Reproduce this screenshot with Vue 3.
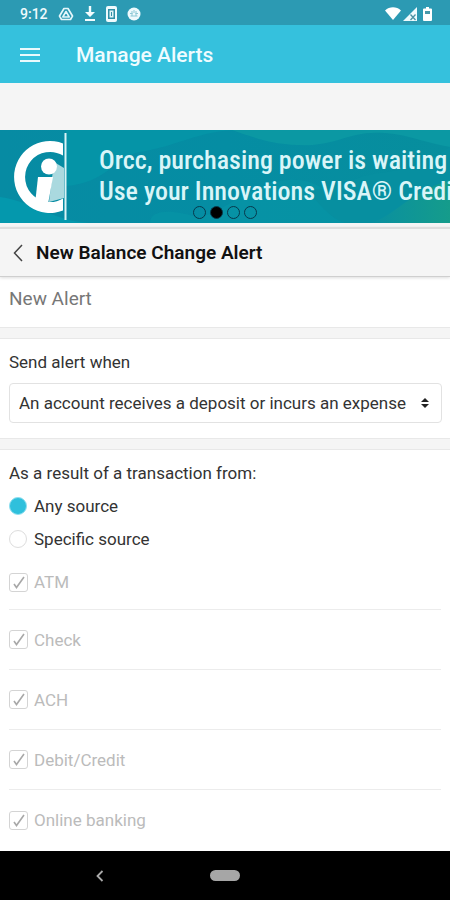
<script setup>
import { ref } from 'vue'

const trigger = ref('any-activity')
const source = ref('any')
const channels = ref([
  { id: 'atm', label: 'ATM', checked: true },
  { id: 'check', label: 'Check', checked: true },
  { id: 'ach', label: 'ACH', checked: true },
  { id: 'card', label: 'Debit/Credit', checked: true },
  { id: 'online', label: 'Online banking', checked: true },
])
</script>

<template>
  <div class="screen">
    <div class="status">
      <span class="clock">9:12</span>
      <div class="notices">
        <svg width="16" height="14" viewBox="0 0 16 14">
          <path d="M6 1.500h4l4.500 7.500-2 3.500h-9l-2-3.500z" fill="none" stroke="#e4f6fa" stroke-width="1.700" stroke-linejoin="round" />
          <path d="M8 4.500l3.200 5.500H4.800z" fill="none" stroke="#e4f6fa" stroke-width="1.600" stroke-linejoin="round" />
        </svg>
        <svg width="12" height="16" viewBox="0 0 12 16">
          <path d="M4.800 0h2.400v6H11l-5 5-5-5h3.800zM1 13h10v2H1z" fill="#f4fcfe" />
        </svg>
        <svg width="11" height="16" viewBox="0 0 11 16">
          <rect width="11" height="16" rx="2" fill="#effafd" />
          <rect x="2" y="3" width="7" height="10" fill="#2f8fa6" />
          <path d="M3.500 4.500h4v7h-4z" fill="#dff4f8" />
          <path d="M5.500 6v4" stroke="#2f8fa6" />
        </svg>
        <svg width="14" height="14" viewBox="0 0 14 14">
          <circle cx="7" cy="7" r="6.500" fill="#effafd" />
          <path d="M3 6.500h2.500M8.500 6.500H11M3.500 9h7M7 3v3M5 4v5M9 4v5" stroke="#8cc8d5" fill="none" />
        </svg>
      </div>
      <div class="signals">
        <svg width="16" height="13" viewBox="0 0 16 13">
          <path d="M0 3.500C4.500-.9 11.500-.9 16 3.500L8 13z" fill="#fff" />
        </svg>
        <svg width="14" height="14" viewBox="0 0 14 14">
          <path d="M14 0v14H0z" fill="#eefafd" />
          <path d="M7.500 7.500l5 5.500M12.500 7.500l-5 5.500" stroke="#4a91a3" stroke-width="1.300" />
        </svg>
        <svg class="battery" width="9" height="14" viewBox="0 0 9 14">
          <path d="M3 0h3v1.500h2q1 0 1 1V13q0 1-1 1H1q-1 0-1-1V2.500q0-1 1-1h2z" fill="#fff" />
          <path d="M2 4h5v3H2z" fill="#4898aa" />
        </svg>
      </div>
    </div>

    <header class="appbar">
      <button class="icon-btn" type="button" aria-label="Menu">
        <svg width="20" height="14" viewBox="0 0 20 14">
          <path d="M0 1h20M0 7h20M0 13h20" stroke="#e9fafd" stroke-width="2" />
        </svg>
      </button>
      <h1>Manage Alerts</h1>
    </header>

    <section class="banner">
      <svg class="waves" viewBox="0 0 450 93" preserveAspectRatio="none">
        <defs>
          <linearGradient id="wash" x1="0" y1="0" x2="1" y2="0">
            <stop offset="0" stop-color="#078ba3" />
            <stop offset="0.500" stop-color="#058da3" />
            <stop offset="1" stop-color="#078e9d" />
          </linearGradient>
          <linearGradient id="shore" x1="0" y1="0" x2="1" y2="0">
            <stop offset="0" stop-color="#098fa1" />
            <stop offset="1" stop-color="#159c8b" />
          </linearGradient>
        </defs>
        <path d="M0 0h450v93H0z" fill="url(#wash)" />
        <path d="M66 0h174c-40 0-65 17-100 22-25 4-32 31-74 34z" fill="#0594a7" />
        <path d="M232 0c20 7 38 14 65 15 42 2 50-15 88-12 25 2 44 11 65 14V0z" fill="#0b98a3" />
        <path d="M0 67c35 5 55 25 91 26H0z" fill="#0498ad" />
        <path d="M150 93c0-15 27-13 48-5 27-7 55-35 90-38 34-2 42 18 63 30 9 6 22 9 31 13z" fill="#0796a7" opacity=".6" />
        <path d="M300 58c35 6 50-12 80-15 28-3 49-12 70-26v76H345c-22-8-26-25-45-35z" fill="#078fa0" />
        <path d="M370 93c25-7 35-28 80-43v43z" fill="url(#shore)" />
      </svg>
      <svg class="logo" width="54" height="87" viewBox="0 0 54 87">
        <path d="M50 10.400A36 36 0 1 0 50 77.600V65.400A25 25 0 1 1 50 22.600z" fill="#fff" />
        <path d="M41 29l10 6v30l-15 4z" fill="#aad9df" />
        <circle cx="36" cy="33.500" r="8" fill="#fff" />
        <path d="M25 44h15l-5 27H22z" fill="#fff" />
        <path d="M52.500 0v87" stroke="#d9f3f6" stroke-width="2" />
      </svg>
      <p class="pitch">Orcc, purchasing power is waiting<br />Use your Innovations VISA® Credi</p>
      <div class="dots">
        <button type="button" aria-label="Slide 1"></button>
        <button type="button" class="on" aria-label="Slide 2"></button>
        <button type="button" aria-label="Slide 3"></button>
        <button type="button" aria-label="Slide 4"></button>
      </div>
    </section>

    <div class="titlebar">
      <button class="icon-btn" type="button" aria-label="Back">
        <svg width="10" height="18" viewBox="0 0 10 18">
          <path d="M9 1L1.500 9 9 17" fill="none" stroke="#444" stroke-width="1.500" />
        </svg>
      </button>
      <h2>New Balance Change Alert</h2>
    </div>

    <main>
      <section class="card intro"><p>New Alert</p></section>

      <section class="card when">
        <label for="trigger">Send alert when</label>
        <div class="select">
          <select id="trigger" v-model="trigger">
            <option value="any-activity">An account receives a deposit or incurs an expense</option>
          </select>
          <svg width="8" height="10" viewBox="0 0 8 10">
            <path d="M0 4l4-4 4 4zM0 6h8l-4 4z" fill="#222" />
          </svg>
        </div>
      </section>

      <section class="card from">
        <fieldset>
          <legend>As a result of a transaction from:</legend>
          <label class="choice"><input v-model="source" type="radio" name="source" value="any" />Any source</label>
          <label class="choice"><input v-model="source" type="radio" name="source" value="specific" />Specific source</label>
        </fieldset>
        <ul>
          <li v-for="c in channels" :key="c.id">
            <label class="channel">
              <span class="tick">
                <input v-model="c.checked" type="checkbox" :disabled="source === 'any'" />
                <svg v-if="c.checked" width="12" height="13" viewBox="0 0 12 13">
                  <path d="M1 8l2.500 3.500L11 1" fill="none" stroke="#a8a8a8" stroke-width="1.600" />
                </svg>
              </span>
              {{ c.label }}
            </label>
          </li>
        </ul>
      </section>
    </main>

    <nav class="sysnav">
      <button type="button" aria-label="System back">
        <svg width="8" height="12" viewBox="0 0 8 12">
          <path d="M6.500 1L1.500 6l5 5" fill="none" stroke="#aaa" stroke-width="1.800" />
        </svg>
      </button>
      <button class="home" type="button" aria-label="Home"><span></span></button>
      <span></span>
    </nav>
  </div>
</template>

<style>
body {
  background: #fff;
}
</style>

<style scoped>
* {
  box-sizing: border-box;
}
.screen {
  display: flex;
  flex-direction: column;
  min-height: 100vh;
  overflow: hidden;
  background: #f5f5f5;
  color: #333;
  font: 17px/20px Roboto, "Liberation Sans", sans-serif;
}
h1, h2, p, ul, fieldset, legend {
  margin: 0;
  padding: 0;
  border: 0;
}
ul {
  list-style: none;
}
button {
  display: grid;
  place-items: center;
  padding: 0;
  border: 0;
  background: none;
}
.status {
  display: flex;
  align-items: center;
  height: 25px;
  padding: 2px 18px 0 20px;
  background: #2c9ab3;
  color: #effafd;
}
.clock {
  font-size: 14px;
  font-weight: 500;
}
.notices {
  display: flex;
  align-items: center;
  gap: 10px;
  margin-left: 10px;
}
.signals {
  display: flex;
  align-items: center;
  gap: 2px;
  margin-left: auto;
}
.battery {
  margin-left: 4px;
}
.appbar {
  display: flex;
  align-items: center;
  gap: 36px;
  height: 58px;
  margin-bottom: 47px;
  padding: 2px 20px 0;
  background: #35c1dd;
}
h1 {
  color: #effcff;
  font-size: 21px;
  font-weight: 500;
  line-height: 28px;
}
.banner {
  position: relative;
  display: flex;
  align-items: center;
  gap: 32px;
  height: 93px;
  padding-left: 13px;
  overflow: hidden;
  background: #078ba3;
}
.waves {
  position: absolute;
  inset: 0;
  width: 100%;
  height: 100%;
}
.logo,
.pitch {
  position: relative;
  flex: none;
}
.pitch {
  padding-bottom: 2px;
  color: #d9f5f8;
  font-family: "Roboto Condensed", "Liberation Sans Narrow", Roboto, sans-serif;
  font-size: 26px;
  font-weight: 500;
  line-height: 31px;
  white-space: nowrap;
}
.dots {
  position: absolute;
  bottom: 4px;
  left: 50%;
  display: flex;
  gap: 4px;
  transform: translateX(-50%);
}
.dots button {
  width: 13px;
  height: 13px;
  border: 1px solid #07394c;
  border-radius: 50%;
}
.dots .on {
  background: #000;
}
.titlebar {
  display: flex;
  align-items: center;
  gap: 13px;
  height: 50px;
  margin-top: 4px;
  padding: 0 13px;
  border-top: 2px solid #dedede;
  border-bottom: 1px solid #cfcfcf;
  box-shadow: 0 1px 3px #0002;
  z-index: 1;
}
h2 {
  color: #111;
  font-size: 19px;
  font-weight: 600;
  line-height: 24px;
}
main {
  display: flex;
  flex: 1;
  flex-direction: column;
  gap: 10px;
}
.card {
  padding: 12px 9px;
  border-bottom: 1px solid #e8e8e8;
  background: #fff;
}
.intro {
  height: 51px;
  color: #777;
  font-size: 19px;
}
.when {
  height: 101px;
  padding: 13px 8px 14px 9px;
  border-top: 1px solid #e8e8e8;
}
.select {
  position: relative;
  margin-top: 11px;
}
.select svg {
  position: absolute;
  top: 15px;
  right: 13px;
  pointer-events: none;
}
select {
  width: 100%;
  height: 40px;
  padding: 0 28px 0 9px;
  border: 1px solid #e2e2e2;
  border-radius: 4px;
  appearance: none;
  background: #fff;
  color: #333;
  font: inherit;
}
.from {
  flex: 1;
  padding: 13px 9px 0;
  border-top: 1px solid #e8e8e8;
  border-bottom: 0;
}
legend {
  margin-bottom: 6px;
}
.choice {
  display: flex;
  align-items: center;
  gap: 7px;
  height: 33px;
}
.choice input {
  width: 18px;
  height: 18px;
  margin: 0;
  border: 1px solid #ddd;
  border-radius: 50%;
  appearance: none;
}
.choice input:checked {
  border: 1px solid #8edff0;
  background: #2fc0dc;
}
li {
  display: flex;
  align-items: center;
  height: 60px;
  border-bottom: 1px solid #ececec;
}
li:first-child {
  height: 55px;
}
li:last-child {
  border: 0;
}
.channel {
  display: flex;
  align-items: center;
  gap: 6px;
  color: #bbb;
}
.tick {
  display: grid;
  width: 19px;
  height: 19px;
}
.tick > * {
  grid-area: 1 / 1;
  place-self: center;
}
.tick svg {
  pointer-events: none;
}
.tick input {
  width: 19px;
  height: 19px;
  margin: 0;
  border: 1px solid #d4d4d4;
  border-radius: 3px;
  appearance: none;
}
.sysnav {
  display: grid;
  grid-template-columns: 1fr 52px 1fr;
  align-items: center;
  height: 49px;
  background: #000;
}
.home span {
  width: 30px;
  height: 11px;
  border-radius: 6px;
  background: #a6a6a6;
}
</style>
